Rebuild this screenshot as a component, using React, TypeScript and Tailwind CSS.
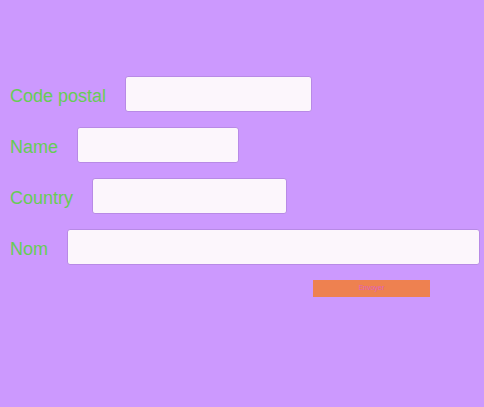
export default function App() {
  const rows = [
    { label: "Code postal", w: "w-[187px]" },
    { label: "Name", w: "w-[162px]" },
    { label: "Country", w: "w-[195px]" },
    { label: "Nom", w: "w-[413px]" },
  ];

  return (
    <main className="min-h-[407px] w-[484px] bg-[#cc99fe] font-['Liberation_Sans',Arial,sans-serif]">
      <div className="flex flex-col gap-[15px] pt-[76px] pl-[10px]">
        {rows.map((r) => (
          <div key={r.label} className="flex items-center">
            <label className="mr-[19px] pt-[4px] text-[18px] text-[#66cc55]">{r.label}</label>
            <input
              className={`${r.w} h-[36px] rounded-[3px] border border-[#b88ae6] bg-[#fcf6fc]`}
            />
          </div>
        ))}
      </div>
      <button className="ml-[313px] mt-[15px] flex h-[17px] w-[117px] items-center justify-center bg-[#ee8150] text-[7px] text-[#e060c0]">
        Envoyer
      </button>
    </main>
  );
}
